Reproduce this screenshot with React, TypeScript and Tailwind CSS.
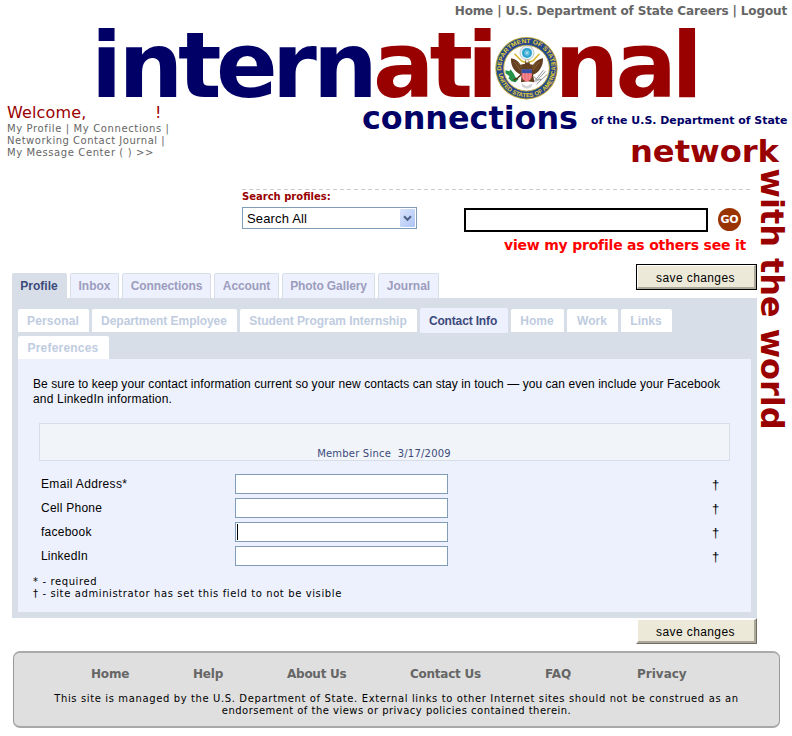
import type { ReactNode } from "react";

const verdana = "font-['DejaVu_Sans',Verdana,sans-serif]";
const arial = "font-['Liberation_Sans',Arial,sans-serif]";

function Seal() {
  return (
    <g transform="translate(526.5 68.2)">
      <circle r="31.2" fill="#b9a53c" />
      <circle r="30.2" fill="#27478c" />
      <defs>
        <path id="sealTop" d="M-24.6 5.5A25.2 25.2 0 1 1 24.6 5.5" />
        <path id="sealBottom" d="M-28.4 4.5A28.8 28.8 0 0 0 28.6 -4" />
      </defs>
      <g fill="#e8d232" fontSize="6" fontWeight="bold" fontFamily="'Liberation Sans', Arial, sans-serif">
        <text>
          <textPath href="#sealTop" startOffset="3" textLength="80" lengthAdjust="spacingAndGlyphs">DEPARTMENT OF STATE</textPath>
        </text>
        <text>
          <textPath href="#sealBottom" startOffset="1" textLength="87" lengthAdjust="spacingAndGlyphs">UNITED STATES OF AMERICA</textPath>
        </text>
      </g>
      <circle r="22.8" fill="#fff" stroke="#c9b64a" strokeWidth="1" />
      <circle cx="0.5" cy="-15.3" r="7" fill="#e8f1f5" stroke="#a9bcc4" strokeWidth="0.8" />
      <circle cx="0.5" cy="-15.3" r="5" fill="#2ba3cf" />
      <path d="M-2.5 -15.3h6M0.5 -18.3v6M-1.6 -17.4l4.2 4.2M2.6 -17.4l-4.2 4.2" stroke="#bfe4f0" strokeWidth="0.7" />
      <path d="M-12 -14.5L-4.5 -7L-1 -6M13 -14.5L6.5 -7.5L2 -6" stroke="#d8b92e" strokeWidth="1.6" fill="none" />
      <path d="M-15.5 -10C-11 -9.5 -8 -7 -6 -3.5L-1.5 -4.5L-1 -8.5L2 -9L3.5 -4L6.5 -3.5C9 -7 12 -9.5 16.5 -10C17 -2.5 12.5 4.5 6.5 6.5L8 14L1 13L-5.5 14L-5 6.5C-12 4 -16 -2 -15.5 -10Z" fill="#63401f" />
      <path d="M-12 -6l6 8M-9 -6.5l4 6M12.5 -6l-6 8M10 -6.5l-4 6" stroke="#8d6a3a" strokeWidth="0.8" />
      <path d="M-0.8 -8.8h3.2l-0.4 3h-2.4z" fill="#f5f0e4" />
      <path d="M-5 1h10.5v6q-0.5 5 -5.2 6.5q-4.8 -1.5 -5.3 -6.5z" fill="#f0717a" />
      <path d="M-5 1h10.5v4h-10.5z" fill="#3250a4" />
      <path d="M-2.7 5v6.5M0.3 5v8M3.2 5v6.5" stroke="#f7a2a6" strokeWidth="0.7" />
      <path d="M-21 2l4 1 1-2 3 4 2 4 3 2-3 3-4-1-3-3 1-2-4-3z" fill="#249247" />
      <path d="M-13 12l4-2 4-4" stroke="#543820" strokeWidth="1.6" fill="none" />
      <path d="M7 8l4 4 4-1M9 14l10-11M10 16l11-10M8 13l9-11" stroke="#8f9190" strokeWidth="1" fill="none" />
      <path d="M-5 15l5 3 6-3-1 4-5 1.500-4.500-2z" fill="#d2d4d8" />
    </g>
  );
}

function Wordmark() {
  return (
    <svg width="792" height="80" viewBox="0 22 792 80" className="block overflow-visible">
      <g fontFamily="'DejaVu Sans', Verdana, sans-serif" fontWeight="bold" fontSize="91">
        <text fill="#000066" y="97" x="91 118.500 178 216 272 313">intern</text>
        <text fill="#990000" y="97" x="373 429.500 467">ati</text>
        <text fill="#990000" y="97" x="554.500 615.500 671.500">nal</text>
      </g>
      <Seal />
    </svg>
  );
}

function Tagline() {
  return (
    <svg width="442" height="66" viewBox="350 102 442 66" className="block shrink-0 overflow-visible">
      <g fontFamily="'DejaVu Sans', Verdana, sans-serif" fontWeight="bold">
        <text x="362" y="128.800" fontSize="31.500" fill="#000066" textLength="216" lengthAdjust="spacingAndGlyphs">connections</text>
        <text x="591" y="124" fontSize="11" fill="#000066" textLength="196.500" lengthAdjust="spacingAndGlyphs">of the U.S. Department of State</text>
        <text x="630" y="162" fontSize="30" fill="#990000" textLength="149" lengthAdjust="spacingAndGlyphs">network</text>
      </g>
    </svg>
  );
}

function SaveButton({ focused = false }: { focused?: boolean }) {
  const edge = focused ? "border border-black" : "border border-t-white border-l-white border-r-[#716f64] border-b-[#716f64]";
  return (
    <button className={`block h-[26px] w-[121px] shrink-0 ${edge}`}>
      <span className={`flex h-full items-center justify-center border-t border-l border-r-2 border-b-2 border-t-white border-l-white border-r-[#aca899] border-b-[#aca899] bg-[#ece9d8] pt-[2px] pr-px text-[12px] tracking-[0.4px] text-black ${arial}`}>
        save changes
      </span>
    </button>
  );
}

const tabs = [
  { label: "Inbox", size: "w-[49px]" },
  { label: "Connections", size: "w-[89px] tracking-[-0.1px]" },
  { label: "Account", size: "w-[65px] tracking-[-0.1px]" },
  { label: "Photo Gallery", size: "w-[93px] tracking-[-0.1px]" },
  { label: "Journal", size: "w-[61px]" },
];

function SubTab({ size, children }: { size: string; children: ReactNode }) {
  return <div className={`flex h-[23px] items-center justify-center rounded-t-[2px] bg-white pr-px text-[#c0cce0] ${size}`}>{children}</div>;
}

const fields = [
  { label: "Email Address*", spacing: "tracking-[0.35px]", caret: false },
  { label: "Cell Phone", spacing: "tracking-[0.25px]", caret: false },
  { label: "facebook", spacing: "tracking-[0.25px]", caret: true },
  { label: "LinkedIn", spacing: "tracking-[0.2px]", caret: false },
];

function Search() {
  return (
    <div className="ml-[242px] flex h-[70px] w-[508px] flex-col">
      <div className="h-px w-full bg-[repeating-linear-gradient(90deg,#cccccc_0_4px,transparent_4px_7px)]" />
      <div className="mt-px h-[13px] text-[10px] leading-[12px] font-bold text-[#990000]">Search profiles:</div>
      <div className="mt-[3px] flex h-[25px] items-start">
        <div className={`flex h-[22px] w-[175px] items-center justify-between border border-[#7f9db9] pr-px pl-1 text-[13px] tracking-[0.15px] text-black ${arial}`}>
          <span className="pt-px">Search All</span>
          <span className="flex h-[18px] w-[15px] items-center justify-center rounded-[1px] bg-linear-to-br from-[#dbe6fe] to-[#aec4f5]">
            <svg width="9" height="7" viewBox="0 0 9 7"><path d="M1 1.300l3.500 3.500L8 1.300" stroke="#4d6185" strokeWidth="2" fill="none" /></svg>
          </span>
        </div>
        <div className="mt-px ml-[47px] h-[24px] w-[244px] border-2 border-black bg-white" />
        <div className="mt-px ml-[10px] flex h-[23px] w-[23px] items-center justify-center rounded-full bg-[#993300] text-[11px] leading-none font-bold tracking-[-0.3px] text-white">GO</div>
      </div>
      <div className="mt-[4px] mr-[4px] text-right text-[14px] leading-[18px] font-bold tracking-[-0.21px] text-[#ff0000]">view my profile as others see it</div>
    </div>
  );
}

function Profile() {
  return (
    <div className={`ml-3 flex w-[745px] flex-col ${arial}`}>
      <div className="flex h-[34px] justify-between">
        <div className="flex items-end gap-[3px] text-[12px] font-bold text-[#9c9cbd]">
          <div className="flex h-[25px] w-[55px] items-center justify-center rounded-t-[2px] bg-[#d7dee8] pr-px text-[#3c4a7b]">Profile</div>
          {tabs.map((t) => (
            <div key={t.label} className={`flex h-[25px] items-center justify-center rounded-t-[2px] border border-b-0 border-[#d7dee8] bg-[#edf1fd] ${t.size}`}>{t.label}</div>
          ))}
        </div>
        <SaveButton focused />
      </div>

      <div className="flex h-[320px] flex-col bg-[#d7dee8] px-[6px] pt-[10px] pb-[6px]">
        <div className="flex h-[25px] items-center gap-[3px] text-[12px] font-bold">
          <SubTab size="w-[71px] tracking-[0.15px]">Personal</SubTab>
          <SubTab size="w-[145px] tracking-[-0.05px]">Department Employee</SubTab>
          <SubTab size="w-[177px] tracking-[-0.05px]">Student Program Internship</SubTab>
          <div className="flex h-[25px] w-[88px] items-center justify-center rounded-t-[2px] bg-[#edf1fd] pr-[2px] tracking-[-0.15px] text-[#3c4a7b]">Contact Info</div>
          <SubTab size="w-[53px]">Home</SubTab>
          <SubTab size="w-[51px]">Work</SubTab>
          <SubTab size="w-[51px]">Links</SubTab>
        </div>
        <div className="mt-[3px] flex text-[12px] font-bold">
          <SubTab size="w-[91px] tracking-[0.2px]">Preferences</SubTab>
        </div>
        <div className="flex flex-1 flex-col bg-[#edf1fd] px-[15px] pt-[18px] text-black">
          <p className="text-[12px] leading-[15px] whitespace-nowrap">
            <span className="tracking-[0.06px]">Be sure to keep your contact information current so your new contacts can stay in touch — you can even include your Facebook</span>
            <br />
            <span className="tracking-[0.17px]">and LinkedIn information.</span>
          </p>
          <div className={`mt-[16px] ml-[6px] flex h-[38px] w-[691px] items-end justify-center border border-[#d7dee8] bg-[#f1f5fa] pr-px text-[10px] leading-[12px] tracking-[0.2px] whitespace-pre text-[#3c4a7b] ${verdana}`}>
            {"Member Since  3/17/2009"}
          </div>
          <div className="mt-[13px] ml-2 flex flex-col gap-1">
            {fields.map((f) => (
              <div key={f.label} className="flex h-5 items-center">
                <div className={`w-[194px] pb-px text-[12px] ${f.spacing}`}>{f.label}</div>
                <div className="flex h-5 w-[213px] items-center border border-[#7f9db9] bg-white pl-px">
                  {f.caret && <div className="h-4 w-px bg-black" />}
                </div>
                <div className="ml-[264px] pt-px text-[13px]">†</div>
              </div>
            ))}
          </div>
          <div className={`mt-[10px] text-[10px] leading-[12px] tracking-[0.61px] ${verdana}`}>
            * - required
            <br />† - site administrator has set this field to not be visible
          </div>
        </div>
      </div>
      <div className="flex justify-end">
        <SaveButton />
      </div>
    </div>
  );
}

function Footer() {
  return (
    <footer className="mt-[7px] ml-[13px] h-[77px] w-[767px] rounded-[7px] border-x border-t-2 border-b-2 border-x-[#999999] border-t-[#aaaaaa] border-b-[#a8a8a8] bg-[#dfdfdf] pt-[12px]">
      <nav className="flex h-[18px] items-center pl-[77px] text-[12px] font-bold whitespace-nowrap text-[#666666]">
        <a className="w-[102px] tracking-[-0.2px]">Home</a>
        <a className="w-[94px] tracking-[-0.2px]">Help</a>
        <a className="w-[123px] tracking-[-0.25px]">About Us</a>
        <a className="w-[135px] tracking-[-0.25px]">Contact Us</a>
        <a className="w-[92px]">FAQ</a>
        <a>Privacy</a>
      </nav>
      <p className="mt-[10px] text-center text-[10px] leading-[12px] text-black">
        <span className="tracking-[0.62px]">This site is managed by the U.S. Department of State. External links to other Internet sites should not be construed as an</span>
        <br />
        <span className="tracking-[0.48px]">endorsement of the views or privacy policies contained therein.</span>
      </p>
    </footer>
  );
}

export default function App() {
  return (
    <div className={`h-[736px] w-[792px] overflow-hidden bg-white ${verdana}`}>
      <nav className="h-[22px] pt-[4px] pr-[5px] text-right text-[12px] leading-[15px] font-bold tracking-[-0.14px] text-[#666666]">
        Home | U.S. Department of State Careers | Logout
      </nav>
      <Wordmark />
      <div className="flex h-[66px]">
        <div className="w-[350px] pl-[7px] text-[10px] leading-[12px] text-[#666666]">
          <div className="flex h-[21px] items-center pt-px text-[16px] text-[#990000]">
            <span className="w-[148px] tracking-[0.15px]">Welcome,</span>
            <span>!</span>
          </div>
          <div className="tracking-[0.62px]">My Profile | My Connections |</div>
          <div className="tracking-[0.52px]">Networking Contact Journal |</div>
          <div className="tracking-[0.6px]">My Message Center ( ) &gt;&gt;</div>
        </div>
        <Tagline />
      </div>
      <div className="flex h-[476px]">
        <main className="w-[757px] pt-[21px]">
          <Search />
          <div className="mt-[5px]">
            <Profile />
          </div>
        </main>
        <aside className="w-[35px]">
          <svg width="35" height="270" viewBox="757 168 35 270" className="block overflow-visible">
            <text
              transform="translate(761 168.500) rotate(90)"
              fontFamily="'DejaVu Sans', Verdana, sans-serif"
              fontWeight="bold"
              fontSize="32"
              fill="#990000"
              textLength="261"
              lengthAdjust="spacingAndGlyphs"
            >
              with the world
            </text>
          </svg>
        </aside>
      </div>
      <Footer />
    </div>
  );
}
